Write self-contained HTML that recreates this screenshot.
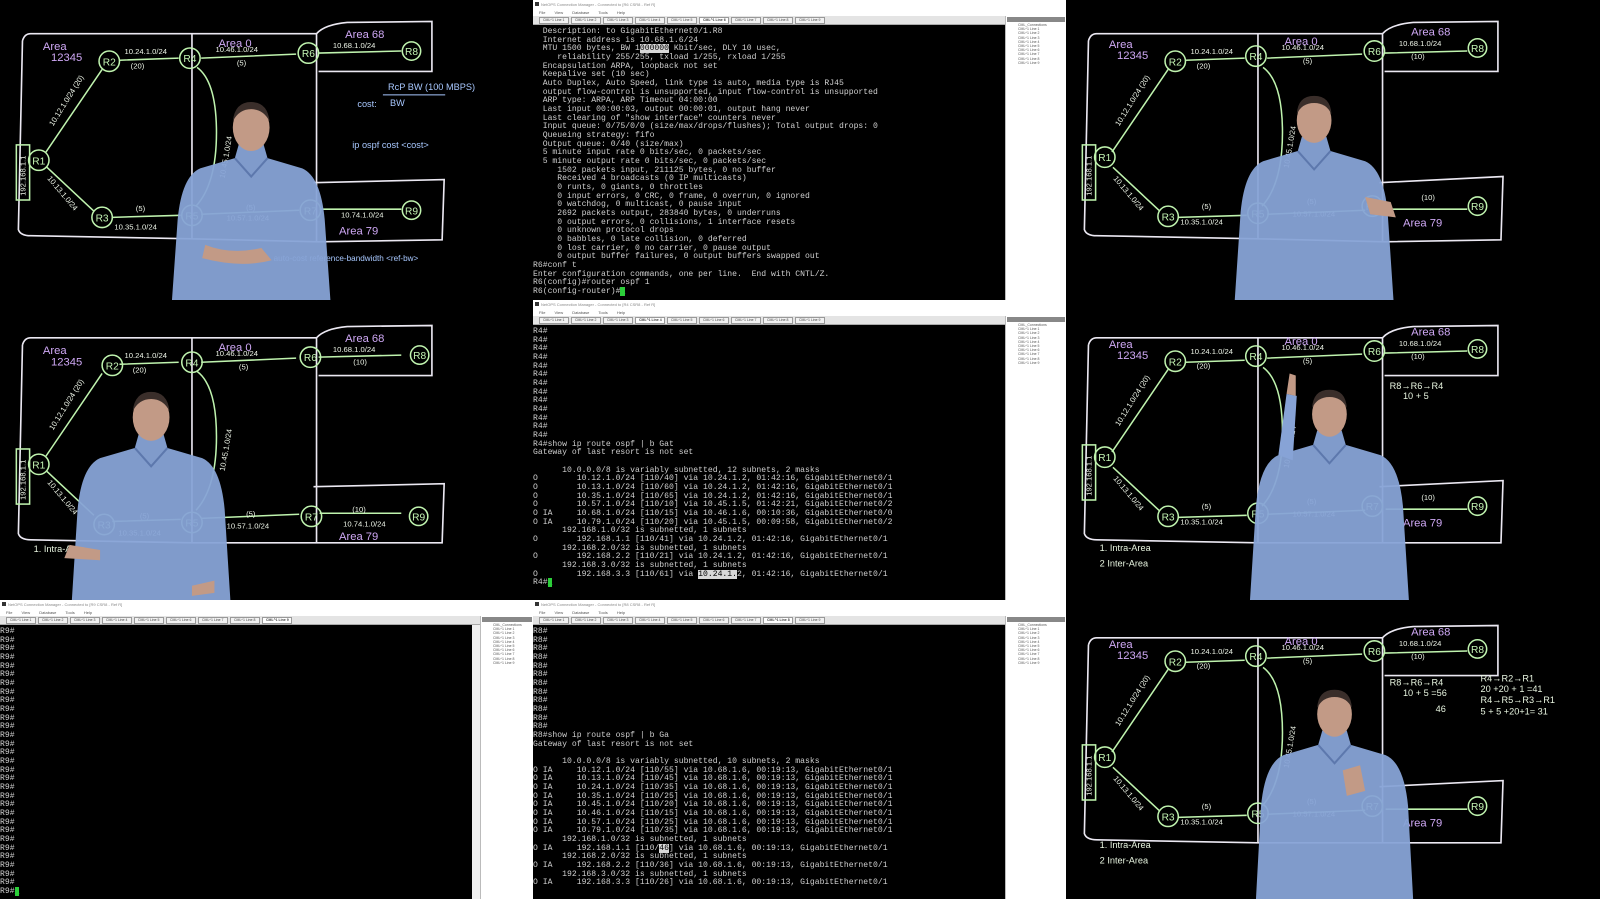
<!DOCTYPE html>
<html><head><meta charset="utf-8">
<style>
*{margin:0;padding:0;box-sizing:border-box}
body{width:1600px;height:899px;background:#000;position:relative;overflow:hidden;font-family:"Liberation Sans",sans-serif}
.p{position:absolute;overflow:hidden;background:#000;width:533px;height:300px}
.p svg{position:absolute;left:0;top:0}
.win{position:absolute;background:#fff;overflow:hidden;width:533px;height:300px}
.tt{position:absolute;left:0;right:0;top:0;height:8px;background:#fff;font-size:4px;color:#888;padding:2px 0 0 8px;white-space:nowrap}
.tt:before{content:"";position:absolute;left:2px;top:2px;width:4px;height:4px;background:#333}
.mn{position:absolute;left:0;right:0;top:8px;height:8px;background:#fff;font-size:4px;color:#555;padding:2px 0 0 6px;word-spacing:8px;white-space:nowrap}
.tb{position:absolute;left:0;right:0;top:16px;height:9px;background:#e4e4e4;border-bottom:1px solid #aaa;white-space:nowrap;padding:1px 0 0 6px}
.tb span{display:inline-block;width:30px;height:7px;border:1px solid #999;background:#f2f2f2;font-size:3.5px;color:#444;margin-right:2px;vertical-align:top;padding-left:3px}
.tb span.a{background:#fff;font-weight:bold}
.con{position:absolute;left:0;top:25px;bottom:0;background:#000;overflow:hidden}
.con pre{font-family:"Liberation Mono",monospace;font-size:8.1px;line-height:8.67px;color:#cfcfcf;padding:3px 0 0 0}
.pane{position:absolute;top:16px;bottom:0;background:#fff;border-left:1px solid #bbb}
.pane .h{height:5px;background:#888;margin:1px}
.pane div.i{font-size:3.5px;color:#555;padding-left:12px;height:4.2px;white-space:nowrap}
.cur{background:#2ccf3a;color:#2ccf3a}
.hl{background:#d8d8d8;color:#000}
</style></head><body>

<!-- Row1 left -->
<div class="p" style="left:0;top:0">
<svg width="533" height="300" viewBox="0 0 522 294" preserveAspectRatio="none">
<g fill="none" stroke="#ebe8f2" stroke-width="1.6">
<path d="M30,33 L188,33 L310,33 Q318,24 340,22 L423,21 L423,70 L312,70 M22,40 Q24,33 30,33 M22,40 L18,225 Q20,231 30,231 L188,234 L312,237 M188,33 L188,234 M310,33 L310,237 M307,179 L435,176 L433,235 L312,237"/>
</g>
<g fill="none" stroke="#bff3ae" stroke-width="1.5">
<path d="M117,59 L175,57 M197,57 L290,53 M312,52 L393,50 M45,149 L100,68 M46,164 L92,207 M110,213 L177,211 M197,210 L293,206 M313,205 L393,205 M193,66 Q212,80 212,130 Q212,180 192,202"/>
<rect x="16" y="142" width="13" height="54"/>
<circle cx="107" cy="60" r="10"/><circle cx="186" cy="57" r="10"/><circle cx="302" cy="52" r="10"/><circle cx="403" cy="50" r="9"/>
<circle cx="38" cy="157" r="10"/><circle cx="100" cy="213" r="10"/><circle cx="188" cy="211" r="10"/><circle cx="304" cy="206" r="10"/><circle cx="403" cy="206" r="9"/>
</g>
<g fill="#c4f5b4" font-size="10" text-anchor="middle">
<text x="107" y="64">R2</text><text x="186" y="61">R4</text><text x="302" y="56">R6</text><text x="403" y="54">R8</text>
<text x="38" y="161">R1</text><text x="100" y="217">R3</text><text x="188" y="215">R5</text><text x="304" y="210">R7</text><text x="403" y="210">R9</text>
</g>
<g fill="#eef5e8" font-size="7.5">
<text x="122" y="53">10.24.1.0/24</text><text x="128" y="67">(20)</text><text x="211" y="51">10.46.1.0/24</text><text x="232" y="64">(5)</text>
<text x="326" y="47">10.68.1.0/24</text><text x="112" y="225">10.35.1.0/24</text><text x="133" y="207">(5)</text><text x="222" y="216">10.57.1.0/24</text><text x="241" y="206">(5)</text>
<text x="334" y="213">10.74.1.0/24</text>
<text transform="translate(52,124) rotate(-58)">10.12.1.0/24 (20)</text>
<text transform="translate(46,175) rotate(50)">10.13.1.0/24</text>
<text transform="translate(220,175) rotate(-80)">10.45.1.0/24</text>
<text transform="translate(25,192) rotate(-90)">192.168.1.1</text>
</g>
<g fill="#cfa8f5" font-size="11">
<text x="42" y="49">Area</text><text x="50" y="60">12345</text><text x="214" y="46">Area 0</text><text x="338" y="37">Area 68</text><text x="332" y="230">Area 79</text>
</g>
<g fill="#a8c8ff" font-size="9">
<text x="380" y="88">RcP BW  (100 MBPS)</text><text x="350" y="105">cost:</text><text x="382" y="104">BW</text><line x1="375" y1="93" x2="436" y2="93" stroke="#a8c8ff"/>
<text x="345" y="145">ip  ospf  cost  &lt;cost&gt;</text><text x="268" y="256" font-size="8">auto-cost reference-bandwidth &lt;ref-bw&gt;</text>
</g>
<g transform="translate(246,125)">
<path d="M-12,16 L12,16 L16,30 L50,40 Q68,48 72,90 L78,175 L-78,175 L-72,90 Q-68,48 -50,40 L-16,30 Z" fill="#87a3d6" opacity=".95"/>
<path d="M-16,30 L0,48 L16,30" fill="none" stroke="#5d78ad" stroke-width="2"/>
<ellipse cx="0" cy="0" rx="18" ry="23" fill="#c29a86"/><path d="M-18,-6 Q-16,-25 0,-25 Q16,-25 18,-6 Q12,-18 0,-18 Q-12,-18 -18,-6Z" fill="#3a2e2a"/>
<path d="M-45,115 Q-20,125 10,118 L20,130 Q-10,138 -48,128Z" fill="#c29a86"/>
</g>
</svg></div>

<!-- Row1 right -->
<div class="p" style="left:1066px;top:0">
<svg width="533" height="300" viewBox="0 0 522 294" preserveAspectRatio="none">
<g fill="none" stroke="#ebe8f2" stroke-width="1.6">
<path d="M30,33 L188,33 L310,33 Q318,24 340,22 L423,21 L423,70 L312,70 M22,40 Q24,33 30,33 M22,40 L18,225 Q20,231 30,231 L188,234 L312,237 M188,33 L188,234 M310,33 L310,237 M307,179 L428,173 L426,235 L312,237"/>
</g>
<g fill="none" stroke="#bff3ae" stroke-width="1.5">
<path d="M117,59 L175,57 M197,57 L290,53 M312,52 L393,50 M45,149 L100,68 M46,164 L92,207 M110,213 L177,211 M197,210 L293,206 M313,205 L393,205 M193,66 Q212,80 212,130 Q212,180 192,202"/>
<rect x="16" y="142" width="13" height="54"/>
<circle cx="107" cy="60" r="10"/><circle cx="186" cy="55" r="10"/><circle cx="302" cy="50" r="10"/><circle cx="403" cy="47" r="9"/>
<circle cx="38" cy="154" r="10"/><circle cx="100" cy="212" r="10"/><circle cx="188" cy="209" r="10"/><circle cx="300" cy="202" r="10"/><circle cx="403" cy="202" r="9"/>
</g>
<g fill="#c4f5b4" font-size="10" text-anchor="middle">
<text x="107" y="64">R2</text><text x="186" y="59">R4</text><text x="302" y="54">R6</text><text x="403" y="51">R8</text>
<text x="38" y="158">R1</text><text x="100" y="216">R3</text><text x="188" y="213">R5</text><text x="300" y="206">R7</text><text x="403" y="206">R9</text>
</g>
<g fill="#eef5e8" font-size="7.5">
<text x="122" y="53">10.24.1.0/24</text><text x="128" y="67">(20)</text><text x="211" y="49">10.46.1.0/24</text><text x="232" y="62">(5)</text>
<text x="326" y="45">10.68.1.0/24</text><text x="338" y="58">(10)</text><text x="112" y="220">10.35.1.0/24</text><text x="133" y="205">(5)</text><text x="222" y="212">10.57.1.0/24</text><text x="236" y="200">(5)</text>
<text x="348" y="196">(10)</text>
<text transform="translate(52,124) rotate(-58)">10.12.1.0/24 (20)</text>
<text transform="translate(46,175) rotate(50)">10.13.1.0/24</text>
<text transform="translate(218,165) rotate(-80)">10.45.1.0/24</text>
<text transform="translate(25,192) rotate(-90)">192.168.1.1</text>
</g>
<g fill="#cfa8f5" font-size="11">
<text x="42" y="47">Area</text><text x="50" y="58">12345</text><text x="214" y="44">Area 0</text><text x="338" y="35">Area 68</text><text x="330" y="222">Area 79</text>
</g>
<g transform="translate(243,118)">
<path d="M-12,16 L12,16 L16,30 L50,40 Q68,48 72,90 L78,180 L-78,180 L-72,90 Q-68,48 -50,40 L-16,30 Z" fill="#87a3d6" opacity=".95"/>
<path d="M-16,30 L0,48 L16,30" fill="none" stroke="#5d78ad" stroke-width="2"/>
<ellipse cx="0" cy="0" rx="17" ry="22" fill="#c29a86"/><path d="M-17,-6 Q-16,-24 0,-24 Q16,-24 17,-6 Q12,-17 0,-17 Q-12,-17 -17,-6Z" fill="#3a2e2a"/>
<path d="M50,75 L75,80 L80,95 L55,92Z" fill="#c29a86"/>
</g>
</svg></div>

<!-- Row2 left -->
<div class="p" style="left:0;top:300px">
<svg width="533" height="300" viewBox="0 0 522 294" preserveAspectRatio="none">
<g fill="none" stroke="#ebe8f2" stroke-width="1.6">
<path d="M30,37 L188,37 L310,37 Q318,28 340,26 L423,25 L423,74 L312,74 M22,44 Q24,37 30,37 M22,44 L18,229 Q20,235 30,235 L188,238 L312,238 M188,37 L188,238 M310,37 L310,238 M307,183 L435,180 L433,238 L312,238"/>
</g>
<g fill="none" stroke="#bff3ae" stroke-width="1.5">
<path d="M117,63 L175,61 M197,61 L290,57 M312,56 L393,54 M45,153 L100,72 M46,168 L92,211 M110,217 L177,215 M197,214 L293,210 M313,209 L393,209 M193,70 Q212,84 212,134 Q212,184 192,206"/>
<rect x="16" y="146" width="13" height="54"/>
<circle cx="110" cy="64" r="10"/><circle cx="188" cy="61" r="10"/><circle cx="304" cy="56" r="10"/><circle cx="411" cy="54" r="9"/>
<circle cx="38" cy="161" r="10"/><circle cx="102" cy="220" r="10"/><circle cx="188" cy="218" r="10"/><circle cx="305" cy="212" r="10"/><circle cx="410" cy="212" r="9"/>
</g>
<g fill="#c4f5b4" font-size="10" text-anchor="middle">
<text x="110" y="68">R2</text><text x="188" y="65">R4</text><text x="304" y="60">R6</text><text x="411" y="58">R8</text>
<text x="38" y="165">R1</text><text x="102" y="224">R3</text><text x="188" y="222">R5</text><text x="305" y="216">R7</text><text x="410" y="216">R9</text>
</g>
<g fill="#eef5e8" font-size="7.5">
<text x="122" y="57">10.24.1.0/24</text><text x="130" y="71">(20)</text><text x="211" y="55">10.46.1.0/24</text><text x="234" y="68">(5)</text>
<text x="326" y="51">10.68.1.0/24</text><text x="346" y="63">(10)</text><text x="116" y="231">10.35.1.0/24</text><text x="137" y="214">(5)</text><text x="222" y="224">10.57.1.0/24</text><text x="241" y="212">(5)</text>
<text x="336" y="222">10.74.1.0/24</text><text x="345" y="208">(10)</text>
<text transform="translate(52,128) rotate(-58)">10.12.1.0/24 (20)</text>
<text transform="translate(46,179) rotate(50)">10.13.1.0/24</text>
<text transform="translate(220,168) rotate(-80)">10.45.1.0/24</text>
<text transform="translate(25,196) rotate(-90)">192.168.1.1</text>
</g>
<g fill="#cfa8f5" font-size="11">
<text x="42" y="53">Area</text><text x="50" y="64">12345</text><text x="214" y="50">Area 0</text><text x="338" y="41">Area 68</text><text x="332" y="235">Area 79</text>
</g>
<text x="33" y="247" fill="#e8f5e0" font-size="9">1. Intra-Area</text>
<g transform="translate(148,115)">
<path d="M-12,16 L12,16 L16,30 L50,40 Q68,48 72,90 L78,185 L-78,185 L-72,90 Q-68,48 -50,40 L-16,30 Z" fill="#87a3d6" opacity=".95"/>
<path d="M-16,30 L0,48 L16,30" fill="none" stroke="#5d78ad" stroke-width="2"/>
<ellipse cx="0" cy="0" rx="18" ry="23" fill="#c29a86"/><path d="M-18,-6 Q-16,-25 0,-25 Q16,-25 18,-6 Q12,-18 0,-18 Q-12,-18 -18,-6Z" fill="#3a2e2a"/>
<path d="M-80,125 L-50,130 L-50,140 L-85,138Z" fill="#c29a86"/><path d="M40,165 L62,160 L62,172 L40,175Z" fill="#c29a86"/>
</g>
</svg></div>

<!-- Row2 right -->
<div class="p" style="left:1066px;top:300px">
<svg width="533" height="300" viewBox="0 0 522 294" preserveAspectRatio="none">
<g fill="none" stroke="#ebe8f2" stroke-width="1.6">
<path d="M30,37 L188,37 L310,37 Q318,28 340,26 L423,25 L423,74 L312,74 M22,44 Q24,37 30,37 M22,44 L18,229 Q20,235 30,235 L188,238 L312,238 M188,37 L188,238 M310,37 L310,238 M307,183 L428,177 L426,238 L312,238"/>
</g>
<g fill="none" stroke="#bff3ae" stroke-width="1.5">
<path d="M117,61 L175,59 M197,57 L290,53 M312,52 L393,50 M45,149 L100,68 M46,164 L92,207 M110,213 L177,211 M197,210 L293,206 M313,205 L393,205 M193,66 Q212,80 212,130 Q212,180 192,202"/>
<rect x="16" y="142" width="13" height="54"/>
<circle cx="107" cy="60" r="10"/><circle cx="186" cy="55" r="10"/><circle cx="302" cy="50" r="10"/><circle cx="403" cy="48" r="9"/>
<circle cx="38" cy="154" r="10"/><circle cx="100" cy="212" r="10"/><circle cx="188" cy="209" r="10"/><circle cx="300" cy="202" r="10"/><circle cx="403" cy="202" r="9"/>
</g>
<g fill="#c4f5b4" font-size="10" text-anchor="middle">
<text x="107" y="64">R2</text><text x="186" y="59">R4</text><text x="302" y="54">R6</text><text x="403" y="52">R8</text>
<text x="38" y="158">R1</text><text x="100" y="216">R3</text><text x="188" y="213">R5</text><text x="300" y="206">R7</text><text x="403" y="206">R9</text>
</g>
<g fill="#eef5e8" font-size="7.5">
<text x="122" y="53">10.24.1.0/24</text><text x="128" y="67">(20)</text><text x="211" y="49">10.46.1.0/24</text><text x="232" y="62">(5)</text>
<text x="326" y="45">10.68.1.0/24</text><text x="338" y="58">(10)</text><text x="112" y="220">10.35.1.0/24</text><text x="133" y="205">(5)</text><text x="222" y="212">10.57.1.0/24</text><text x="236" y="200">(5)</text>
<text x="348" y="196">(10)</text>
<text transform="translate(52,124) rotate(-58)">10.12.1.0/24 (20)</text>
<text transform="translate(46,175) rotate(50)">10.13.1.0/24</text>
<text transform="translate(218,165) rotate(-80)">10.45.1.0/24</text>
<text transform="translate(25,192) rotate(-90)">192.168.1.1</text>
</g>
<g fill="#cfa8f5" font-size="11">
<text x="42" y="47">Area</text><text x="50" y="58">12345</text><text x="214" y="44">Area 0</text><text x="338" y="35">Area 68</text><text x="330" y="222">Area 79</text>
</g>
<g fill="#e8f5e0" font-size="9"><text x="317" y="87">R8→R6→R4</text><text x="330" y="97">10 + 5</text><text x="33" y="246">1. Intra-Area</text><text x="33" y="261">2 Inter-Area</text></g>
<g transform="translate(258,112)">
<path d="M-12,16 L12,16 L16,30 L50,40 Q68,48 72,90 L78,185 L-78,185 L-72,90 Q-68,48 -50,40 L-16,30 Z" fill="#87a3d6" opacity=".95"/>
<path d="M-16,30 L0,48 L16,30" fill="none" stroke="#5d78ad" stroke-width="2"/>
<path d="M-50,40 L-42,-20 L-32,-18 L-36,45Z" fill="#87a3d6"/><path d="M-42,-20 L-39,-40 L-33,-38 L-33,-18Z" fill="#c29a86"/>
<ellipse cx="0" cy="0" rx="17" ry="22" fill="#c29a86"/><path d="M-17,-6 Q-16,-24 0,-24 Q16,-24 17,-6 Q12,-17 0,-17 Q-12,-17 -17,-6Z" fill="#3a2e2a"/>
</g>
</svg></div>

<!-- Row3 right -->
<div class="p" style="left:1066px;top:600px;height:299px">
<svg width="533" height="300" viewBox="0 0 522 294" preserveAspectRatio="none">
<g fill="none" stroke="#ebe8f2" stroke-width="1.6">
<path d="M30,37 L188,37 L310,37 Q318,28 340,26 L423,25 L423,74 L312,74 M22,44 Q24,37 30,37 M22,44 L18,229 Q20,235 30,235 L188,238 L312,238 M188,37 L188,238 M310,37 L310,238 M307,183 L428,177 L426,238 L312,238"/>
</g>
<g fill="none" stroke="#bff3ae" stroke-width="1.5">
<path d="M117,61 L175,59 M197,57 L290,53 M312,52 L393,50 M45,149 L100,68 M46,164 L92,207 M110,213 L177,211 M197,210 L293,206 M313,205 L393,205 M193,66 Q212,80 212,130 Q212,180 192,202"/>
<rect x="16" y="142" width="13" height="54"/>
<circle cx="107" cy="60" r="10"/><circle cx="186" cy="55" r="10"/><circle cx="302" cy="50" r="10"/><circle cx="403" cy="48" r="9"/>
<circle cx="38" cy="154" r="10"/><circle cx="100" cy="212" r="10"/><circle cx="188" cy="209" r="10"/><circle cx="300" cy="202" r="10"/><circle cx="403" cy="202" r="9"/>
</g>
<g fill="#c4f5b4" font-size="10" text-anchor="middle">
<text x="107" y="64">R2</text><text x="186" y="59">R4</text><text x="302" y="54">R6</text><text x="403" y="52">R8</text>
<text x="38" y="158">R1</text><text x="100" y="216">R3</text><text x="188" y="213">R5</text><text x="300" y="206">R7</text><text x="403" y="206">R9</text>
</g>
<g fill="#eef5e8" font-size="7.5">
<text x="122" y="53">10.24.1.0/24</text><text x="128" y="67">(20)</text><text x="211" y="49">10.46.1.0/24</text><text x="232" y="62">(5)</text>
<text x="326" y="45">10.68.1.0/24</text><text x="338" y="58">(10)</text><text x="112" y="220">10.35.1.0/24</text><text x="133" y="205">(5)</text><text x="222" y="212">10.57.1.0/24</text><text x="236" y="200">(5)</text>
<text transform="translate(52,124) rotate(-58)">10.12.1.0/24 (20)</text>
<text transform="translate(46,175) rotate(50)">10.13.1.0/24</text>
<text transform="translate(218,165) rotate(-80)">10.45.1.0/24</text>
<text transform="translate(25,192) rotate(-90)">192.168.1.1</text>
</g>
<g fill="#cfa8f5" font-size="11">
<text x="42" y="47">Area</text><text x="50" y="58">12345</text><text x="214" y="44">Area 0</text><text x="338" y="35">Area 68</text><text x="330" y="222">Area 79</text>
</g>
<g fill="#e8f5e0" font-size="9"><text x="317" y="84">R8→R6→R4</text><text x="330" y="94">10 + 5  =56</text><text x="362" y="110">46</text>
<text x="406" y="80">R4→R2→R1</text><text x="406" y="90">20 +20 + 1 =41</text><text x="406" y="101">R4→R5→R3→R1</text><text x="406" y="112">5 + 5 +20+1= 31</text>
<text x="33" y="243">1. Intra-Area</text><text x="33" y="258">2 Inter-Area</text></g>
<g transform="translate(263,112)">
<path d="M-12,16 L12,16 L16,30 L50,40 Q68,48 72,90 L78,200 L-78,200 L-72,90 Q-68,48 -50,40 L-16,30 Z" fill="#87a3d6" opacity=".95"/>
<path d="M-16,30 L0,48 L16,30" fill="none" stroke="#5d78ad" stroke-width="2"/>
<ellipse cx="0" cy="0" rx="17" ry="22" fill="#c29a86"/><path d="M-17,-6 Q-16,-24 0,-24 Q16,-24 17,-6 Q12,-17 0,-17 Q-12,-17 -17,-6Z" fill="#3a2e2a"/>
<path d="M8,55 L25,50 L30,75 L12,80Z" fill="#c29a86"/>
</g>
</svg></div>

<!-- Top middle -->
<div class="win" style="left:533px;top:0">
<div class="tt">NetOPS Connection Manager - Connected to [R6 CSR8 - Ref R]</div>
<div class="mn">File View Database Tools Help</div>
<div class="tb"><span>CML^1 Line 1</span><span>CML^1 Line 2</span><span>CML^1 Line 3</span><span>CML^1 Line 4</span><span>CML^1 Line 5</span><span class="a">CML^1 Line 6</span><span>CML^1 Line 7</span><span>CML^1 Line 8</span><span>CML^1 Line 9</span></div>
<div class="con" style="width:472px"><pre>  Description: to GigabitEthernet0/1.R8
  Internet address is 10.68.1.6/24
  MTU 1500 bytes, BW 1<span class="hl">000000</span> Kbit/sec, DLY 10 usec,
     reliability 255/255, txload 1/255, rxload 1/255
  Encapsulation ARPA, loopback not set
  Keepalive set (10 sec)
  Auto Duplex, Auto Speed, link type is auto, media type is RJ45
  output flow-control is unsupported, input flow-control is unsupported
  ARP type: ARPA, ARP Timeout 04:00:00
  Last input 00:00:03, output 00:00:01, output hang never
  Last clearing of "show interface" counters never
  Input queue: 0/75/0/0 (size/max/drops/flushes); Total output drops: 0
  Queueing strategy: fifo
  Output queue: 0/40 (size/max)
  5 minute input rate 0 bits/sec, 0 packets/sec
  5 minute output rate 0 bits/sec, 0 packets/sec
     1502 packets input, 211125 bytes, 0 no buffer
     Received 4 broadcasts (0 IP multicasts)
     0 runts, 0 giants, 0 throttles
     0 input errors, 0 CRC, 0 frame, 0 overrun, 0 ignored
     0 watchdog, 0 multicast, 0 pause input
     2692 packets output, 283840 bytes, 0 underruns
     0 output errors, 0 collisions, 1 interface resets
     0 unknown protocol drops
     0 babbles, 0 late collision, 0 deferred
     0 lost carrier, 0 no carrier, 0 pause output
     0 output buffer failures, 0 output buffers swapped out
R6#conf t
Enter configuration commands, one per line.  End with CNTL/Z.
R6(config)#router ospf 1
R6(config-router)#<span class="cur">_</span></pre></div>
<div class="pane" style="left:472px;width:61px"><div class="h"></div><div class="i">CML_Connections</div><div class="i">CML^1 Line 1</div><div class="i">CML^1 Line 2</div><div class="i">CML^1 Line 3</div><div class="i">CML^1 Line 4</div><div class="i">CML^1 Line 5</div><div class="i">CML^1 Line 6</div><div class="i">CML^1 Line 7</div><div class="i">CML^1 Line 8</div><div class="i">CML^1 Line 9</div></div>
</div>

<!-- Middle middle -->
<div class="win" style="left:533px;top:300px">
<div class="tt">NetOPS Connection Manager - Connected to [R4 CSR8 - Ref R]</div>
<div class="mn">File View Database Tools Help</div>
<div class="tb"><span>CML^1 Line 1</span><span>CML^1 Line 2</span><span>CML^1 Line 3</span><span class="a">CML^1 Line 4</span><span>CML^1 Line 5</span><span>CML^1 Line 6</span><span>CML^1 Line 7</span><span>CML^1 Line 8</span><span>CML^1 Line 9</span></div>
<div class="con" style="width:472px"><pre>R4#
R4#
R4#
R4#
R4#
R4#
R4#
R4#
R4#
R4#
R4#
R4#
R4#
R4#show ip route ospf | b Gat
Gateway of last resort is not set

      10.0.0.0/8 is variably subnetted, 12 subnets, 2 masks
O        10.12.1.0/24 [110/40] via 10.24.1.2, 01:42:16, GigabitEthernet0/1
O        10.13.1.0/24 [110/60] via 10.24.1.2, 01:42:16, GigabitEthernet0/1
O        10.35.1.0/24 [110/65] via 10.24.1.2, 01:42:16, GigabitEthernet0/1
O        10.57.1.0/24 [110/10] via 10.45.1.5, 01:42:21, GigabitEthernet0/2
O IA     10.68.1.0/24 [110/15] via 10.46.1.6, 00:10:36, GigabitEthernet0/0
O IA     10.79.1.0/24 [110/20] via 10.45.1.5, 00:09:58, GigabitEthernet0/2
      192.168.1.0/32 is subnetted, 1 subnets
O        192.168.1.1 [110/41] via 10.24.1.2, 01:42:16, GigabitEthernet0/1
      192.168.2.0/32 is subnetted, 1 subnets
O        192.168.2.2 [110/21] via 10.24.1.2, 01:42:16, GigabitEthernet0/1
      192.168.3.0/32 is subnetted, 1 subnets
O        192.168.3.3 [110/61] via <span class="hl">10.24.1.</span>2, 01:42:16, GigabitEthernet0/1
R4#<span class="cur">_</span></pre></div>
<div class="pane" style="left:472px;width:61px"><div class="h"></div><div class="i">CML_Connections</div><div class="i">CML^1 Line 1</div><div class="i">CML^1 Line 2</div><div class="i">CML^1 Line 3</div><div class="i">CML^1 Line 4</div><div class="i">CML^1 Line 5</div><div class="i">CML^1 Line 6</div><div class="i">CML^1 Line 7</div><div class="i">CML^1 Line 8</div><div class="i">CML^1 Line 9</div></div>
</div>

<!-- Bottom middle -->
<div class="win" style="left:533px;top:600px;height:299px">
<div class="tt">NetOPS Connection Manager - Connected to [R8 CSR8 - Ref R]</div>
<div class="mn">File View Database Tools Help</div>
<div class="tb"><span>CML^1 Line 1</span><span>CML^1 Line 2</span><span>CML^1 Line 3</span><span>CML^1 Line 4</span><span>CML^1 Line 5</span><span>CML^1 Line 6</span><span>CML^1 Line 7</span><span class="a">CML^1 Line 8</span><span>CML^1 Line 9</span></div>
<div class="con" style="width:472px"><pre>R8#
R8#
R8#
R8#
R8#
R8#
R8#
R8#
R8#
R8#
R8#
R8#
R8#show ip route ospf | b Ga
Gateway of last resort is not set

      10.0.0.0/8 is variably subnetted, 10 subnets, 2 masks
O IA     10.12.1.0/24 [110/55] via 10.68.1.6, 00:19:13, GigabitEthernet0/1
O IA     10.13.1.0/24 [110/45] via 10.68.1.6, 00:19:13, GigabitEthernet0/1
O IA     10.24.1.0/24 [110/35] via 10.68.1.6, 00:19:13, GigabitEthernet0/1
O IA     10.35.1.0/24 [110/25] via 10.68.1.6, 00:19:13, GigabitEthernet0/1
O IA     10.45.1.0/24 [110/20] via 10.68.1.6, 00:19:13, GigabitEthernet0/1
O IA     10.46.1.0/24 [110/15] via 10.68.1.6, 00:19:13, GigabitEthernet0/1
O IA     10.57.1.0/24 [110/25] via 10.68.1.6, 00:19:13, GigabitEthernet0/1
O IA     10.79.1.0/24 [110/35] via 10.68.1.6, 00:19:13, GigabitEthernet0/1
      192.168.1.0/32 is subnetted, 1 subnets
O IA     192.168.1.1 [110/<span class="hl">46</span>] via 10.68.1.6, 00:19:13, GigabitEthernet0/1
      192.168.2.0/32 is subnetted, 1 subnets
O IA     192.168.2.2 [110/36] via 10.68.1.6, 00:19:13, GigabitEthernet0/1
      192.168.3.0/32 is subnetted, 1 subnets
O IA     192.168.3.3 [110/26] via 10.68.1.6, 00:19:13, GigabitEthernet0/1</pre></div>
<div class="pane" style="left:472px;width:61px"><div class="h"></div><div class="i">CML_Connections</div><div class="i">CML^1 Line 1</div><div class="i">CML^1 Line 2</div><div class="i">CML^1 Line 3</div><div class="i">CML^1 Line 4</div><div class="i">CML^1 Line 5</div><div class="i">CML^1 Line 6</div><div class="i">CML^1 Line 7</div><div class="i">CML^1 Line 8</div><div class="i">CML^1 Line 9</div></div>
</div>

<!-- Bottom left -->
<div class="win" style="left:0;top:600px;height:299px">
<div class="tt">NetOPS Connection Manager - Connected to [R9 CSR8 - Ref R]</div>
<div class="mn">File View Database Tools Help</div>
<div class="tb"><span>CML^1 Line 1</span><span>CML^1 Line 2</span><span>CML^1 Line 3</span><span>CML^1 Line 4</span><span>CML^1 Line 5</span><span>CML^1 Line 6</span><span>CML^1 Line 7</span><span>CML^1 Line 8</span><span class="a">CML^1 Line 9</span></div>
<div class="con" style="width:472px"><pre>R9#
R9#
R9#
R9#
R9#
R9#
R9#
R9#
R9#
R9#
R9#
R9#
R9#
R9#
R9#
R9#
R9#
R9#
R9#
R9#
R9#
R9#
R9#
R9#
R9#
R9#
R9#
R9#
R9#
R9#
R9#<span class="cur">_</span></pre></div>
<div style="position:absolute;left:472px;top:25px;width:8px;bottom:0;background:#f0f0f0"></div>
<div class="pane" style="left:480px;width:53px"><div class="h"></div><div class="i">CML_Connections</div><div class="i">CML^1 Line 1</div><div class="i">CML^1 Line 2</div><div class="i">CML^1 Line 3</div><div class="i">CML^1 Line 4</div><div class="i">CML^1 Line 5</div><div class="i">CML^1 Line 6</div><div class="i">CML^1 Line 7</div><div class="i">CML^1 Line 8</div><div class="i">CML^1 Line 9</div></div>
</div>

</body></html>
